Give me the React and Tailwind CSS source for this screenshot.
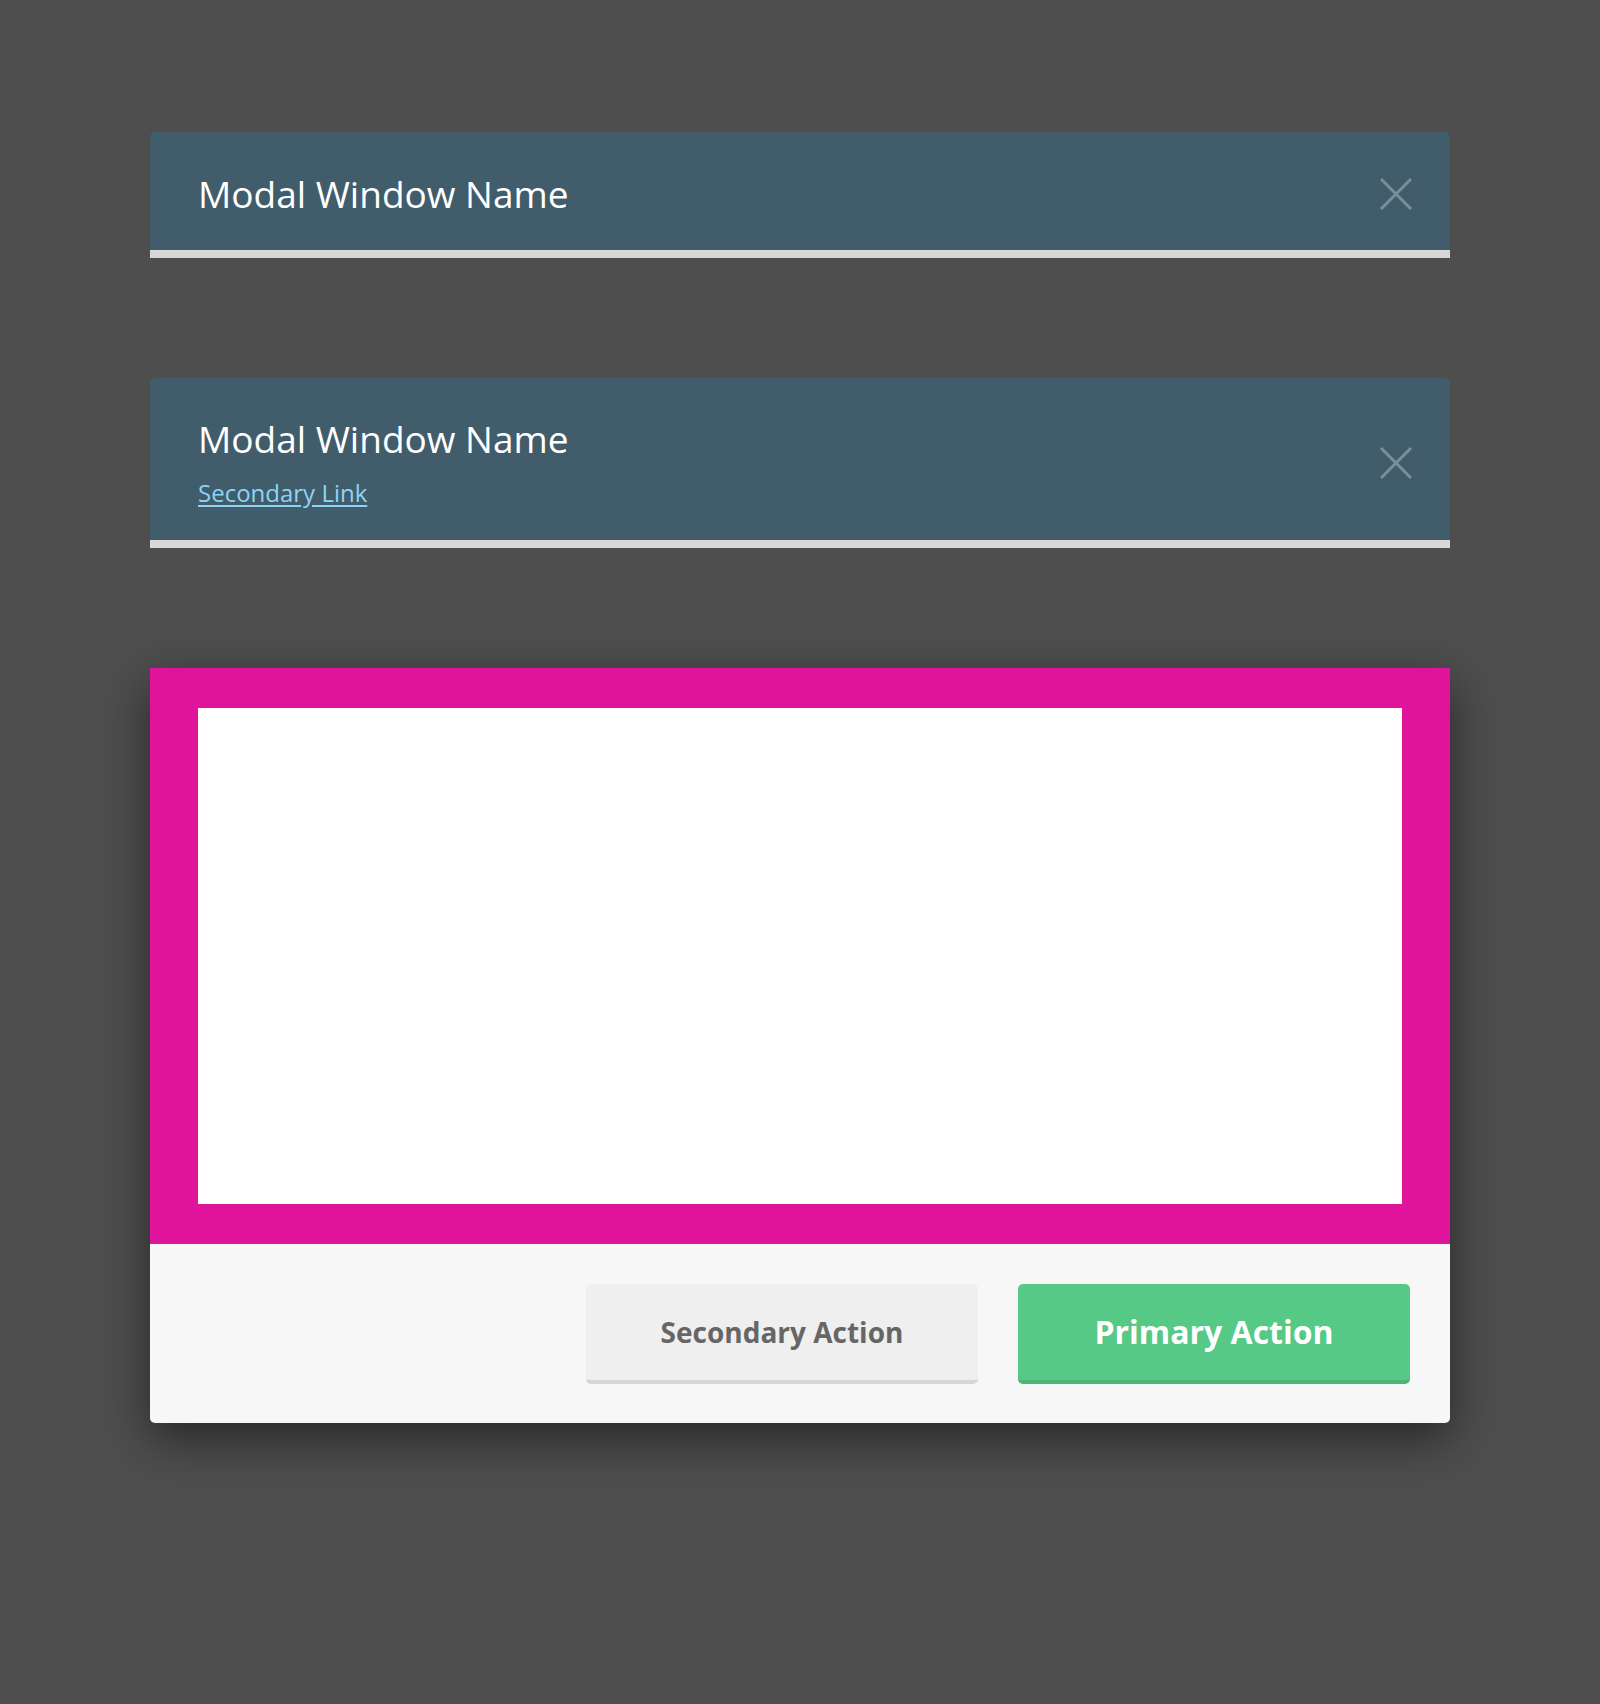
const CloseIcon = () => (
  <svg width="34" height="34" viewBox="0 0 34 34" className="text-[#7b8f98]">
    <path d="M2 2 L32 32 M32 2 L2 32" stroke="currentColor" strokeWidth="3" fill="none" />
  </svg>
);

const App = () => {
  return (
    <div className="min-h-screen bg-[#4e4e4e] px-[150px] pt-[132px] font-['Open_Sans',sans-serif]">
      <div className="flex flex-col gap-[120px]">
        {/* simple header */}
        <div className="flex h-[126px] items-center justify-between rounded-t-[5px] border-b-8 border-[#d8d8d8] bg-[#415c6b] pt-[6px] pl-[48px] pr-[37px]">
          <h2 className="text-[37px] leading-[48px] font-normal text-white">Modal Window Name</h2>
          <CloseIcon />
        </div>

        {/* header with link */}
        <div className="flex h-[170px] items-center justify-between rounded-t-[5px] border-b-8 border-[#d8d8d8] bg-[#415c6b] pt-[7px] pl-[48px] pr-[37px]">
          <div className="flex flex-col">
            <h2 className="text-[37px] leading-[48px] font-normal text-white">Modal Window Name</h2>
            <a href="#" className="mt-[12px] text-[24px] leading-[36px] text-[#8ed4f6] underline underline-offset-[3px]">
              Secondary Link
            </a>
          </div>
          <CloseIcon />
        </div>

        {/* modal with footer */}
        <div className="overflow-hidden rounded-b-[5px] shadow-[0_16px_48px_rgba(0,0,0,0.5)]">
          <div className="bg-[#e0139b] px-[48px] py-[40px]">
            <div className="h-[496px] bg-white"></div>
          </div>
          <div className="flex justify-end gap-[40px] bg-[#f7f7f7] px-[40px] pt-[40px] pb-[39px]">
            <button className="h-[100px] w-[392px] rounded-[5px] border-b-4 border-[#d6d6d6] bg-[#efefef] text-[28px] font-bold text-[#666666]">
              Secondary Action
            </button>
            <button className="h-[100px] w-[392px] rounded-[5px] border-b-4 border-[#4bb574] bg-[#55c985] text-[32px] font-bold text-white">
              Primary Action
            </button>
          </div>
        </div>
      </div>
    </div>
  );
};

export default App;
